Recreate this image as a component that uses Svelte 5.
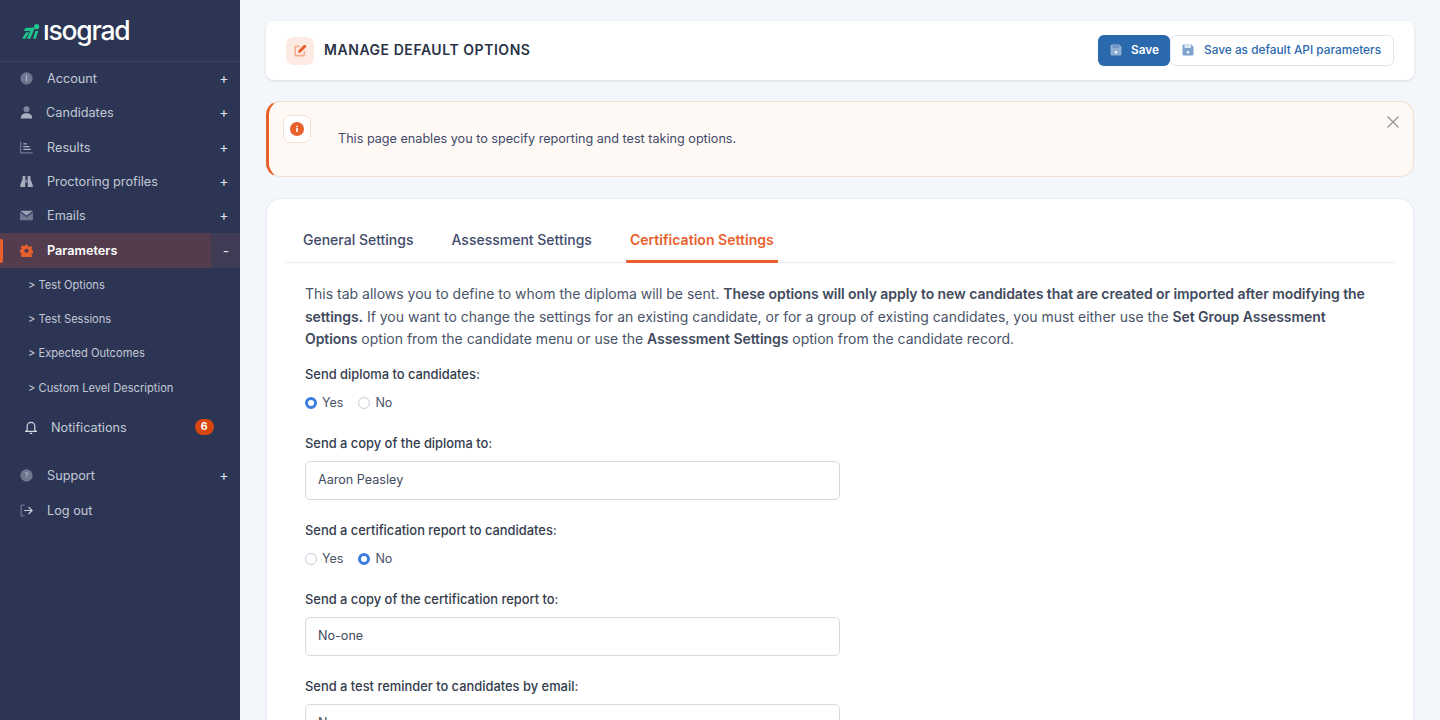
<script>
  const menuTop = [
    { label: 'Account', icon: 'info' },
    { label: 'Candidates', icon: 'user', tight: true },
    { label: 'Results', icon: 'chart' },
    { label: 'Proctoring profiles', icon: 'binoculars' },
    { label: 'Emails', icon: 'mail' }
  ];
  const subItems = ['Test Options', 'Test Sessions', 'Expected Outcomes', 'Custom Level Description'];
  const tabs = ['General Settings', 'Assessment Settings', 'Certification Settings'];
  let activeTab = 2;
</script>

{#snippet menuIcon(name)}
  <svg class="micon" viewBox="0 0 14 14" aria-hidden="true">
    {#if name === 'info'}
      <circle cx="7" cy="7" r="6.6" fill="#6f768f" />
      <rect x="6.5" y="3" width="1" height="5.500" fill="#b9bdcc" />
      <path d="M6 8.300h2L7 10.600z" fill="#b9bdcc" />
    {:else if name === 'user'}
      <circle cx="7" cy="3.400" r="3.200" fill="#7d849b" />
      <path d="M.8 13.500c0-3.800 2.400-5.600 6.200-5.600s6.200 1.800 6.200 5.600z" fill="#aab0c1" />
    {:else if name === 'chart'}
      <path d="M.8 .6v12.200h12.800" fill="none" stroke="#6f768f" stroke-width="1.300" />
      <path d="M3.600 3h3.800M3.600 6h6.600M3.600 9h8" fill="none" stroke="#aab0c1" stroke-width="1.300" />
    {:else if name === 'binoculars'}
      <path d="M2.800 1h3v2.600h-.2V13H.3v-2.200L2.800 4.200zM8.200 1h3v3.200l2.500 6.600V13H8.400V3.600h-.2z" fill="#a9aebf" />
      <rect x="5.600" y="5" width="2.800" height="3.400" fill="#7d849b" />
    {:else if name === 'mail'}
      <path d="M1 2h12a1 1 0 0 1 .6.200L7 7.200.4 2.200A1 1 0 0 1 1 2z" fill="#9aa0b4" />
      <path d="M0 3.400 7 8.700l7-5.300V11a1 1 0 0 1-1 1H1a1 1 0 0 1-1-1z" fill="#6f768f" />
    {:else if name === 'help'}
      <circle cx="7" cy="7" r="6.600" fill="#6f768f" />
      <text x="7" y="9.600" text-anchor="middle" font-size="7.500" font-family="Inter, sans-serif" fill="#b9bdcc">?</text>
    {:else if name === 'logout'}
      <path d="M5 1.200H2.200a1 1 0 0 0-1 1v9.600a1 1 0 0 0 1 1H5" fill="none" stroke="#6f768f" stroke-width="1.300" />
      <path d="M4.400 7h8.600M9.200 3.200 13 7l-3.800 3.800" fill="none" stroke="#c9cdd8" stroke-width="1.300" />
    {/if}
  </svg>
{/snippet}

{#snippet floppy(light)}
  <svg class="floppy" viewBox="0 0 12 12" aria-hidden="true">
    <path d="M2 .5h7.200L11.500 2.800V10a1.500 1.500 0 0 1-1.500 1.500H2A1.500 1.500 0 0 1 .5 10V2A1.500 1.500 0 0 1 2 .5z" fill={light ? '#7fa3cf' : '#8eaed3'} />
    <rect x="2.500" y=".5" width="6.500" height="3.500" fill={light ? '#dbe6f3' : '#6f98c8'} />
    <circle cx="6" cy="8.200" r="1.200" fill="#fff" />
  </svg>
{/snippet}

<div class="layout">
  <aside class="sidebar">
    <div class="brand">
      <svg class="mark" viewBox="0 0 18 15" aria-hidden="true">
        <path d="M0 14.800 4 8.300h3.200L3.300 14.800z" fill="#1fc48d" />
        <path d="M3.200 4 13 3.500 8.300 14.800H4.900L8.300 7H2z" fill="#1fc48d" />
        <circle cx="14.600" cy="2.700" r="2.600" fill="#1fc48d" />
        <path d="M13.400 7h3L13.800 14.800h-2.800z" fill="#1fc48d" />
      </svg>
      <span class="wordmark">ısograd</span>
    </div>

    <nav class="menu">
      {#each menuTop as item}
        <div class="item">
          {@render menuIcon(item.icon)}
          <span class="label" class:tight={item.tight}>{item.label}</span>
          <span class="sign">+</span>
        </div>
      {/each}

      <div class="item active">
        <svg class="micon" viewBox="0 0 14 14" aria-hidden="true">
          <path fill-rule="evenodd" d="M5.700.6h2.600l.4 1.800 1.200.5 1.600-1 1.800 1.800-1 1.600.5 1.200 1.800.4v2.600l-1.800.4-.5 1.200 1 1.600-1.800 1.800-1.600-1-1.200.5-.4 1.800H5.700l-.4-1.800-1.200-.5-1.600 1L.7 11.800l1-1.600-.5-1.200-1.800-.4V6l1.800-.4.5-1.200-1-1.600 1.800-1.800 1.600 1 1.200-.5zM7 4.700a2.300 2.300 0 1 0 0 4.600 2.300 2.300 0 0 0 0-4.600z" fill="#e8602c" transform="translate(0 .3)" />
        </svg>
        <span class="label">Parameters</span>
        <span class="sign minus">-</span>
      </div>

      {#each subItems as sub}
        <div class="sub">&gt; {sub}</div>
      {/each}

      <div class="notif">
        <svg class="bell" viewBox="0 0 12 13" aria-hidden="true">
          <path d="M2.200 9V5.200a3.800 3.800 0 0 1 7.600 0V9l1.400 1.400H.8zM4.800 12.300h2.400" fill="none" stroke="#d4d7e0" stroke-width="1.200" />
        </svg>
        <span class="notif-label">Notifications</span>
        <span class="badge">6</span>
      </div>

      <div class="item support">
        {@render menuIcon('help')}
        <span class="label">Support</span>
        <span class="sign">+</span>
      </div>
      <div class="item logout">
        {@render menuIcon('logout')}
        <span class="label">Log out</span>
      </div>
    </nav>
  </aside>

  <main class="content">
    <header class="topbar">
      <div class="title-wrap">
        <span class="title-icon">
          <svg viewBox="0 0 14 14" aria-hidden="true">
            <path d="M6 2.600H2.400A1.200 1.200 0 0 0 1.200 3.800v7.600a1.200 1.200 0 0 0 1.200 1.200H10a1.200 1.200 0 0 0 1.200-1.200V8" fill="none" stroke="#f6ae90" stroke-width="1.800" />
            <path d="M4.600 7.200 10.600 1.200a1.200 1.200 0 0 1 1.700 0l.5.500a1.200 1.200 0 0 1 0 1.700L6.800 9.400H4.600z" fill="#e8602c" />
          </svg>
        </span>
        <h1>MANAGE DEFAULT OPTIONS</h1>
      </div>
      <div class="actions">
        <button class="btn primary">{@render floppy(false)}<span>Save</span></button>
        <button class="btn outline">{@render floppy(true)}<span>Save as default API parameters</span></button>
      </div>
    </header>

    <section class="alert">
      <span class="alert-icon">
        <svg viewBox="0 0 14 14" aria-hidden="true">
          <circle cx="7" cy="7" r="7" fill="#e8602c" />
          <rect x="6.200" y="6" width="1.600" height="4" fill="#fff" />
          <rect x="6.200" y="3.800" width="1.600" height="1.400" fill="#fff" />
        </svg>
      </span>
      <p>This page enables you to specify reporting and test taking options.</p>
      <svg class="close" viewBox="0 0 12 12" aria-hidden="true">
        <path d="M.5.500l11 11M11.500.500l-11 11" stroke="#8f8f8f" stroke-width="1.100" fill="none" />
      </svg>
    </section>

    <section class="card">
      <div class="tabs">
        {#each tabs as tab, i}
          <button class="tab" class:on={i === activeTab} onclick={() => (activeTab = i)}>{tab}</button>
        {/each}
      </div>

      <div class="form">
        <p class="intro">
          This tab allows you to define to whom the diploma will be sent. <b>These options will only apply to new candidates that are created or imported after modifying the settings.</b> If you want to change the settings for an existing candidate, or for a group of existing candidates, you must either use the <b>Set Group Assessment Options</b> option from the candidate menu or use the <b>Assessment Settings</b> option from the candidate record.
        </p>

        <div class="field radio-field first">
          <span class="field-label">Send diploma to candidates:</span>
          <div class="radios">
            <label><span class="radio checked"></span>Yes</label>
            <label><span class="radio"></span>No</label>
          </div>
        </div>

        <div class="field">
          <span class="field-label">Send a copy of the diploma to:</span>
          <div class="input">Aaron Peasley</div>
        </div>

        <div class="field radio-field">
          <span class="field-label">Send a certification report to candidates:</span>
          <div class="radios">
            <label><span class="radio"></span>Yes</label>
            <label><span class="radio checked"></span>No</label>
          </div>
        </div>

        <div class="field">
          <span class="field-label">Send a copy of the certification report to:</span>
          <div class="input">No-one</div>
        </div>

        <div class="field">
          <span class="field-label">Send a test reminder to candidates by email:</span>
          <div class="input">Never</div>
        </div>
      </div>
    </section>
  </main>
</div>

<style>
  :global(body) {
    margin: 0;
    background: #f3f6fa;
    font-family: Inter, "Noto Sans", sans-serif;
  }

  .layout {
    display: flex;
    height: 720px;
    overflow: hidden;
  }

  .sidebar {
    width: 240px;
    flex: none;
    background: #2c3654;
    color: #c3c8d6;
  }

  .brand {
    height: 62px;
    box-sizing: border-box;
    display: flex;
    align-items: flex-start;
    gap: 3px;
    padding: 15px 0 0 22px;
    border-bottom: 1px solid #3a4462;
  }

  .mark {
    width: 18px;
    height: 15px;
    margin-top: 9px;
    flex: none;
  }

  .wordmark {
    font-size: 26.500px;
    line-height: 30px;
    font-weight: 500;
    letter-spacing: -1.200px;
    color: #fff;
  }

  .menu {
    display: flex;
    flex-direction: column;
  }

  .item {
    height: 34.300px;
    display: flex;
    align-items: center;
    padding-left: 20px;
    font-size: 12.700px;
    position: relative;
  }

  .item.logout {
    margin-top: 1px;
  }

  .micon {
    width: 13px;
    height: 13px;
    flex: none;
    margin-bottom: 1px;
  }

  .label {
    margin-left: 14px;
    padding-bottom: 1px;
  }

  .label.tight {
    margin-left: 13px;
  }

  .sign {
    margin-left: auto;
    width: 31px;
    text-align: center;
    font-size: 14px;
    color: #dfe2ea;
    box-sizing: border-box;
    padding-right: 1px;
    padding-bottom: 3px;
  }

  .item.active {
    background: linear-gradient(to right, #533c4d 211px, #413c55 211px);
    color: #fff;
    font-weight: 600;
  }

  .item.active::before {
    content: "";
    position: absolute;
    left: 0;
    top: 6px;
    bottom: 5px;
    width: 3px;
    background: #e8602c;
    border-radius: 0 2px 2px 0;
  }

  .sign.minus {
    font-weight: 400;
    width: 27px;
    padding-bottom: 0;
  }

  .sub {
    height: 34.300px;
    line-height: 35px;
    padding-left: 28px;
    font-size: 11.150px;
    color: #c3c8d6;
  }

  .notif {
    height: 44px;
    box-sizing: border-box;
    padding-top: 1px;
    display: flex;
    align-items: center;
    padding-left: 25px;
    font-size: 12.700px;
  }

  .bell {
    width: 12px;
    height: 13px;
    flex: none;
  }

  .notif-label {
    margin-left: 14px;
  }

  .badge {
    margin-left: 68px;
    width: 19px;
    height: 16px;
    border-radius: 8px;
    background: #d9460f;
    color: #fff;
    font-size: 10.500px;
    font-weight: 700;
    text-align: center;
    line-height: 16px;
  }

  .support {
    margin-top: 10px;
  }

  .content {
    flex: 1;
    min-width: 0;
    padding: 21px 26px 0;
  }

  .topbar {
    height: 59px;
    background: #fff;
    border-radius: 8px;
    box-shadow: 0 1px 3px rgba(40, 55, 90, .12);
    display: flex;
    align-items: center;
    justify-content: space-between;
    padding: 0 20px;
  }

  .title-wrap {
    display: flex;
    align-items: center;
    gap: 10px;
  }

  .title-icon {
    width: 28px;
    height: 28px;
    border-radius: 8px;
    background: #fdeae2;
    display: flex;
    align-items: center;
    justify-content: center;
  }

  .title-icon svg {
    width: 13px;
    height: 13px;
  }

  h1 {
    margin: 0;
    padding-bottom: 2px;
    font-size: 14px;
    font-weight: 600;
    letter-spacing: .55px;
    color: #2a3347;
  }

  .actions {
    display: flex;
  }

  .btn {
    height: 31px;
    box-sizing: border-box;
    display: flex;
    align-items: center;
    border-radius: 6px;
    font-family: inherit;
    font-size: 11.850px;
    font-weight: 500;
    padding: 0 0 1px;
  }

  .btn.primary {
    width: 72px;
    background: #2b69ad;
    border: 0;
    color: #fff;
    font-weight: 600;
    padding-left: 12px;
    gap: 9px;
  }

  .btn.outline {
    width: 224px;
    background: #fff;
    border: 1px solid #dfe4ee;
    color: #2b69ad;
    padding-left: 11px;
    gap: 10px;
  }

  .floppy {
    width: 12px;
    height: 12px;
    flex: none;
  }

  .alert {
    position: relative;
    margin-top: 21px;
    height: 76px;
    box-sizing: border-box;
    background: #fff9f5;
    border: 1px solid #f5dfcf;
    border-left: 3px solid #e8602c;
    border-radius: 14px;
    display: flex;
    align-items: flex-start;
    padding: 13px 0 0 14px;
  }

  .alert-icon {
    width: 28px;
    height: 28px;
    box-sizing: border-box;
    border: 1px solid #f5dfcf;
    border-radius: 7px;
    background: #fff;
    display: flex;
    align-items: center;
    justify-content: center;
  }

  .alert-icon svg {
    width: 14px;
    height: 14px;
  }

  .alert p {
    margin: 15px 0 0 27px;
    font-size: 12.630px;
    line-height: 18px;
    color: #3f4a6b;
  }

  .close {
    position: absolute;
    top: 14px;
    right: 14px;
    width: 12px;
    height: 12px;
  }

  .card {
    margin-top: 21px;
    background: #fff;
    border: 1px solid #e6ebf2;
    border-radius: 14px;
    padding: 18px 18px 40px;
  }

  .tabs {
    display: flex;
    border-bottom: 1px solid #eceef2;
    height: 45px;
  }

  .tab {
    height: 46px;
    box-sizing: border-box;
    background: none;
    border: 0;
    border-bottom: 3px solid transparent;
    border-radius: 1px;
    padding: 2px 4px 0;
    margin-right: 30px;
    font-family: inherit;
    font-size: 14px;
    font-weight: 500;
    color: #3f4a6b;
  }

  .tab:first-child {
    margin-left: 14px;
  }

  .tab.on {
    color: #e8602c;
    font-weight: 600;
    letter-spacing: .03px;
    border-bottom-color: #e8602c;
  }

  .form {
    padding: 20px 20px 0;
  }

  .intro {
    margin: 0;
    font-size: 14px;
    line-height: 22.500px;
    color: #4a5468;
  }

  .intro b {
    font-weight: 600;
    letter-spacing: -.07px;
    color: #414a5c;
  }

  .field {
    display: flex;
    flex-direction: column;
    margin-top: 22px;
  }

  .radio-field.first {
    margin-top: 15px;
  }

  .radio-field + .field {
    margin-top: 23px;
  }

  .field-label {
    font-size: 12.900px;
    font-weight: 500;
    line-height: 18px;
    color: #343c4e;
  }

  .radios {
    display: flex;
    gap: 15px;
    margin-top: 10px;
    font-size: 12.500px;
    line-height: 18px;
    color: #4a5468;
  }

  .radios label {
    display: flex;
    align-items: center;
    gap: 5px;
  }

  .radio {
    width: 12px;
    height: 12px;
    box-sizing: border-box;
    border: 1px solid #c6ccd8;
    border-radius: 50%;
    background: #fff;
  }

  .radio.checked {
    border: 3.500px solid #3b7ddd;
  }

  .input {
    width: 535px;
    height: 39px;
    box-sizing: border-box;
    margin-top: 8px;
    padding: 0 12px;
    border: 1px solid #d5d9e1;
    border-radius: 5px;
    font-size: 12.600px;
    line-height: 36px;
    color: #414a5c;
  }
</style>
